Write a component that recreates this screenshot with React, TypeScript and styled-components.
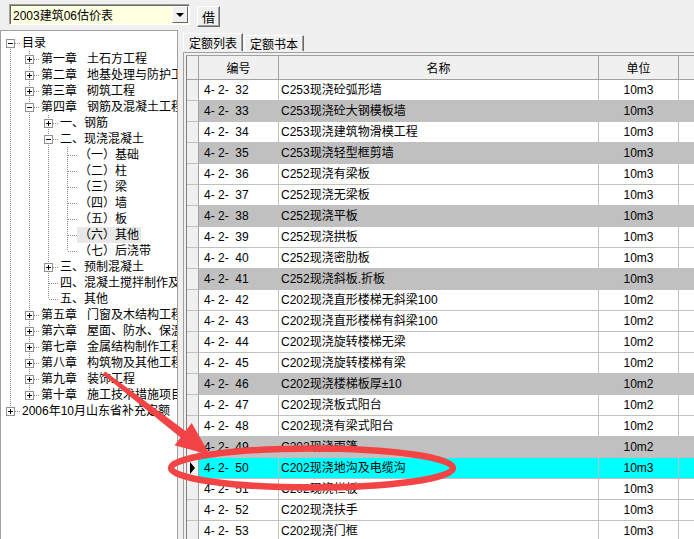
import styled, {createGlobalStyle} from 'styled-components';

const GlobalStyle = createGlobalStyle`
  html, body {
    margin: 0;
    padding: 0;
    background: #f0f0f0;
  }
  body {
    font-family: "Liberation Sans", "Noto Sans CJK SC", sans-serif;
    font-size: 12px;
    color: #000;
  }
`;

const Window = styled.div`
  position: relative;
  width: 694px;
  height: 539px;
  overflow: hidden;
  display: flex;
  flex-direction: column;
  background: #f0f0f0;
`;

const TopBar = styled.div`
  flex: none;
  height: 30px;
  display: flex;
  align-items: flex-start;
  gap: 7px;
  padding-left: 9px;
  box-sizing: border-box;
`;

const Combo = styled.div`
  margin-top: 4px;
  width: 181px;
  height: 21px;
  box-sizing: border-box;
  display: flex;
  align-items: center;
  background: #ffffe1;
  border: 1px solid;
  border-color: #a0a0a0 #fff #fff #a0a0a0;
  box-shadow: inset 1px 1px 0 #696969;
  padding-left: 3px;
`;

const ComboText = styled.span`
  flex: 1;
  white-space: nowrap;
`;

const ComboButton = styled.div`
  width: 16px;
  height: 17px;
  margin-right: 1px;
  box-sizing: border-box;
  display: flex;
  align-items: center;
  justify-content: center;
  background: #f0f0f0;
  border: 1px solid;
  border-color: #fff #696969 #696969 #fff;
  &::after {
    content: '';
    border-top: 4px solid #000;
    border-left: 4px solid transparent;
    border-right: 4px solid transparent;
    margin-top: 1px;
  }
`;

const PushButton = styled.div`
  margin-top: 6px;
  width: 23px;
  height: 21px;
  box-sizing: border-box;
  display: flex;
  align-items: center;
  justify-content: center;
  font-size: 13px;
  background: #f0f0f0;
  border: 1px solid;
  border-color: #fff #696969 #696969 #fff;
  box-shadow: inset -1px -1px 0 #a0a0a0;
`;

const Body = styled.div`
  flex: 1;
  min-height: 0;
  display: flex;
`;

const TreePanel = styled.div`
  flex: none;
  width: 178px;
  box-sizing: border-box;
  background: #fff;
  border: 1px solid #a0a0a0;
  border-bottom: none;
  padding-top: 4px;
  overflow: hidden;
`;

const Splitter = styled.div`
  flex: none;
  width: 5px;
`;

const RightPanel = styled.div`
  flex: 1;
  min-width: 0;
  display: flex;
  flex-direction: column;
`;

const TabStrip = styled.div`
  flex: none;
  height: 21px;
  display: flex;
  align-items: flex-end;
`;

const Tab = styled.div<{$active?: boolean}>`
  height: ${({$active}) => ($active ? '18px' : '16px')};
  box-sizing: border-box;
  padding: 0 5px;
  margin-left: ${({$active}) => ($active ? '0' : '1px')};
  display: flex;
  align-items: center;
  white-space: nowrap;
  background: #f0f0f0;
  border: 1px solid;
  border-bottom: none;
  border-color: #fff #696969 #696969 #fff;
  box-shadow: inset -1px 0 0 #a0a0a0;
`;

const GridFrame = styled.div`
  flex: 1;
  min-height: 0;
  margin-top: 1px;
  border-top: 1px solid #a0a0a0;
  border-left: 1px solid #a0a0a0;
  padding: 2px 0 0 2px;
  overflow: hidden;
`;

const Grid = styled.div`
  width: max-content;
  border-left: 1px solid #808080;
  border-top: 1px solid #a0a0a0;
  background: #fff;
`;

const COLUMNS = '12px 80px 320px 80px 80px';

const HeaderRow = styled.div`
  display: grid;
  grid-template-columns: ${COLUMNS};
`;

const HeaderCell = styled.div`
  height: 24px;
  box-sizing: border-box;
  display: flex;
  align-items: center;
  justify-content: center;
  background: #f0f0f0;
  border-right: 1px solid #a0a0a0;
  border-bottom: 1px solid #a0a0a0;
`;

type Tone = 'plain' | 'gray' | 'current';

const toneColor: Record<Tone, string> = {
  plain: '#fff',
  gray: '#c0c0c0',
  current: '#00ffff',
};

const DataRow = styled.div<{$tone: Tone}>`
  display: grid;
  grid-template-columns: ${COLUMNS};
  background: ${({$tone}) => toneColor[$tone]};
`;

const Cell = styled.div<{$align?: 'left' | 'center'; $pad?: number}>`
  height: 21px;
  box-sizing: border-box;
  display: flex;
  align-items: center;
  justify-content: ${({$align}) => ($align === 'center' ? 'center' : 'flex-start')};
  padding-left: ${({$pad}) => $pad ?? 0}px;
  border-right: 1px solid #c0c0c0;
  border-bottom: 1px solid #c0c0c0;
  line-height: 20px;
  white-space: pre;
  overflow: hidden;
`;

const Indicator = styled(Cell)`
  background: #f0f0f0;
  border-right-color: #a0a0a0;
  padding-left: 3px;
`;

const Pointer = styled.span`
  width: 0;
  height: 0;
  border-left: 5px solid #000;
  border-top: 6px solid transparent;
  border-bottom: 6px solid transparent;
`;

const TreeRow = styled.div`
  height: 16px;
  display: flex;
  align-items: center;
  white-space: nowrap;
`;

const Elbow = styled.svg`
  flex: none;
  display: block;
`;

const Label = styled.span<{$hot?: boolean}>`
  padding: 0 2px;
  line-height: 16px;
  background: ${({$hot}) => ($hot ? '#e8e8e8' : 'transparent')};
`;

const ChapterTitle = styled.span`
  margin-left: 10px;
`;

const Overlay = styled.svg`
  position: absolute;
  left: 0;
  top: 0;
  pointer-events: none;
`;

type TreeNode = {
  label: string;
  title?: string;
  open?: boolean;
  expandable?: boolean;
  hot?: boolean;
  children?: TreeNode[];
};

const chapter = (label: string, title: string): TreeNode => ({label, title, expandable: true});

const TREE: TreeNode[] = [
  {
    label: '目录',
    open: true,
    children: [
      chapter('第一章', '土石方工程'),
      chapter('第二章', '地基处理与防护工程'),
      chapter('第三章', '砌筑工程'),
      {
        label: '第四章',
        title: '钢筋及混凝土工程',
        open: true,
        children: [
          {label: '一、钢筋', expandable: true},
          {
            label: '二、现浇混凝土',
            open: true,
            children: [
              {label: '（一）基础'},
              {label: '（二）柱'},
              {label: '（三）梁'},
              {label: '（四）墙'},
              {label: '（五）板'},
              {label: '（六）其他', hot: true},
              {label: '（七）后浇带'},
            ],
          },
          {label: '三、预制混凝土', expandable: true},
          {label: '四、混凝土搅拌制作及泵送'},
          {label: '五、其他'},
        ],
      },
      chapter('第五章', '门窗及木结构工程'),
      chapter('第六章', '屋面、防水、保温及防腐工程'),
      chapter('第七章', '金属结构制作工程'),
      chapter('第八章', '构筑物及其他工程'),
      chapter('第九章', '装饰工程'),
      chapter('第十章', '施工技术措施项目'),
    ],
  },
  {label: '2006年10月山东省补充定额', expandable: true},
];

type TreeLine = {node: TreeNode; guides: boolean[]; hasPrev: boolean; hasNext: boolean};

const flatten = (nodes: TreeNode[], guides: boolean[], out: TreeLine[]): TreeLine[] => {
  nodes.forEach((node, i) => {
    const hasNext = i < nodes.length - 1;
    out.push({node, guides, hasPrev: i > 0 || guides.length > 0, hasNext});
    if (node.open && node.children) flatten(node.children, [...guides, hasNext], out);
  });
  return out;
};

const STEP = 19;
const DOT = '#8c8c8c';

const Connector = ({line}: {line: TreeLine}) => {
  const {guides, hasPrev, hasNext, node} = line;
  const width = (guides.length + 1) * STEP;
  const x = guides.length * STEP + 9.5;
  const hasBox = node.open || node.expandable;
  return (
    <Elbow width={width} height={16} shapeRendering="crispEdges">
      <g stroke={DOT} strokeDasharray="1 1">
        {guides.map((g, i) =>
          g ? <line key={i} x1={i * STEP + 9.5} y1={0} x2={i * STEP + 9.5} y2={16} /> : null,
        )}
        {hasPrev && <line x1={x} y1={0} x2={x} y2={8} />}
        {hasNext && <line x1={x} y1={8} x2={x} y2={16} />}
        <line x1={x + 0.5} y1={8.5} x2={width} y2={8.5} />
      </g>
      {hasBox && (
        <g>
          <rect x={x - 4} y={4.5} width={8} height={8} fill="#fff" stroke="#919191" />
          <line x1={x - 2.5} y1={8.5} x2={x + 2.5} y2={8.5} stroke="#000" />
          {!node.open && <line x1={x} y1={6} x2={x} y2={11} stroke="#000" />}
        </g>
      )}
    </Elbow>
  );
};

type Quota = {code: number; name: string; unit: string; tone?: Tone};

const QUOTAS: Quota[] = [
  {code: 32, name: 'C253现浇砼弧形墙', unit: '10m3'},
  {code: 33, name: 'C253现浇砼大钢模板墙', unit: '10m3', tone: 'gray'},
  {code: 34, name: 'C253现浇建筑物滑模工程', unit: '10m3'},
  {code: 35, name: 'C253现浇轻型框剪墙', unit: '10m3', tone: 'gray'},
  {code: 36, name: 'C252现浇有梁板', unit: '10m3'},
  {code: 37, name: 'C252现浇无梁板', unit: '10m3'},
  {code: 38, name: 'C252现浇平板', unit: '10m3', tone: 'gray'},
  {code: 39, name: 'C252现浇拱板', unit: '10m3'},
  {code: 40, name: 'C252现浇密肋板', unit: '10m3'},
  {code: 41, name: 'C252现浇斜板.折板', unit: '10m3', tone: 'gray'},
  {code: 42, name: 'C202现浇直形楼梯无斜梁100', unit: '10m2'},
  {code: 43, name: 'C202现浇直形楼梯有斜梁100', unit: '10m2'},
  {code: 44, name: 'C202现浇旋转楼梯无梁', unit: '10m2'},
  {code: 45, name: 'C202现浇旋转楼梯有梁', unit: '10m2'},
  {code: 46, name: 'C202现浇楼梯板厚±10', unit: '10m2', tone: 'gray'},
  {code: 47, name: 'C202现浇板式阳台', unit: '10m2'},
  {code: 48, name: 'C202现浇有梁式阳台', unit: '10m2'},
  {code: 49, name: 'C202现浇雨篷', unit: '10m2', tone: 'gray'},
  {code: 50, name: 'C202现浇地沟及电缆沟', unit: '10m3', tone: 'current'},
  {code: 51, name: 'C202现浇栏板', unit: '10m3'},
  {code: 52, name: 'C202现浇扶手', unit: '10m3'},
  {code: 53, name: 'C202现浇门框', unit: '10m3'},
];

// annotation arrow: tapered shaft from chapter 9 toward the current row
const ARROW = '102.8,374.6 180.6,437.4 174.5,445.3 210,455 191.7,423.1 185.5,431 105.2,371.4';

const App = () => {
  const lines = flatten(TREE, [], []);
  return (
    <Window>
      <GlobalStyle />
      <TopBar>
        <Combo>
          <ComboText>2003建筑06估价表</ComboText>
          <ComboButton />
        </Combo>
        <PushButton>借</PushButton>
      </TopBar>
      <Body>
        <TreePanel>
          {lines.map((line, i) => (
            <TreeRow key={i}>
              <Connector line={line} />
              <Label $hot={line.node.hot}>
                {line.node.label}
                {line.node.title && <ChapterTitle>{line.node.title}</ChapterTitle>}
              </Label>
            </TreeRow>
          ))}
        </TreePanel>
        <Splitter />
        <RightPanel>
          <TabStrip>
            <Tab $active>定额列表</Tab>
            <Tab>定额书本</Tab>
          </TabStrip>
          <GridFrame>
            <Grid>
              <HeaderRow>
                <HeaderCell />
                <HeaderCell>编号</HeaderCell>
                <HeaderCell>名称</HeaderCell>
                <HeaderCell>单位</HeaderCell>
                <HeaderCell />
              </HeaderRow>
              {QUOTAS.map((q) => (
                <DataRow key={q.code} $tone={q.tone ?? 'plain'}>
                  <Indicator>{q.tone === 'current' && <Pointer />}</Indicator>
                  <Cell $pad={5}>{`4- 2-  ${q.code}`}</Cell>
                  <Cell $pad={2}>{q.name}</Cell>
                  <Cell $align="center">{q.unit}</Cell>
                  <Cell />
                </DataRow>
              ))}
            </Grid>
          </GridFrame>
        </RightPanel>
      </Body>
      <Overlay width={694} height={539}>
        <ellipse cx={312} cy={468} rx={141} ry={19.5} fill="none" stroke="#f24444" strokeWidth={6.5} />
        <polygon points={ARROW} fill="#f24444" />
      </Overlay>
    </Window>
  );
};

export default App;
